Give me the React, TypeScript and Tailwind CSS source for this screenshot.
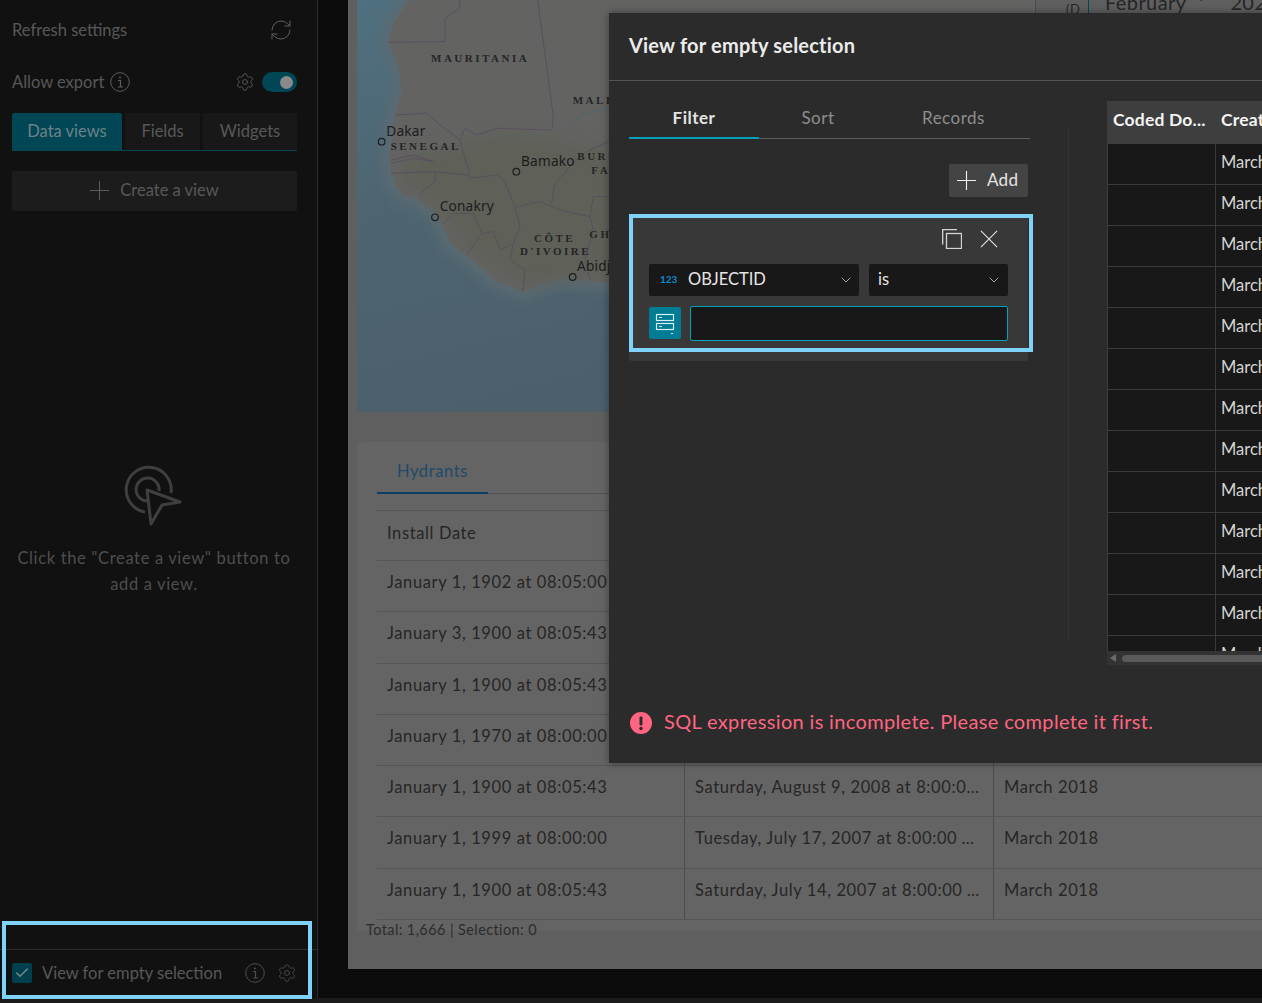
import React from "react";
import { Settings, Check, ChevronDown, RefreshCw } from "lucide-react";

const Info = ({ c, s = 20 }: { c: string; s?: number }) => (
  <svg width={s} height={s} viewBox="0 0 20 20" fill="none" stroke={c} strokeWidth="1">
    <circle cx="10" cy="10" r="9.3" />
    <path d="M8 8.5h2.5V15M8 15h5" strokeWidth="1.2" />
    <circle cx="10" cy="5.6" r="1" fill={c} stroke="none" />
  </svg>
);

const Cross = ({ c, s = 20, w = 1.2, diag = false }: { c: string; s?: number; w?: number; diag?: boolean }) => (
  <svg width={s} height={s} viewBox="0 0 20 20" fill="none" stroke={c} strokeWidth={w}>
    {diag ? <path d="M1 1L19 19M19 1L1 19" /> : <path d="M10 0V20M0 10H20" />}
  </svg>
);

const COAST = "M175 0L130 70L115 125L145 200L155 270L135 345L125 420L118 470L125 520L140 560L165 590L200 590L225 620L250 630L280 680L305 735L350 765L390 800L430 840L518 875L575 850L640 835L720 843L786 850L2055 850V0Z";

const WestAfricaMap = () => (
  <svg width="678" height="412" viewBox="21 0 2034 1236" className="block">
    <defs>
      <linearGradient id="sea" x1="0" y1="0" x2="0.4" y2="1">
        <stop offset="0" stopColor="#4f7080" />
        <stop offset="0.45" stopColor="#4e6571" />
        <stop offset="1" stopColor="#4b5f6b" />
      </linearGradient>
      <filter id="soft" x="-20%" y="-20%" width="140%" height="140%">
        <feGaussianBlur stdDeviation="16" />
      </filter>
      <filter id="softer" x="-20%" y="-20%" width="140%" height="140%">
        <feGaussianBlur stdDeviation="22" />
      </filter>
    </defs>
    <rect x="21" width="2034" height="1236" fill="url(#sea)" />
    <path d={COAST} fill="#5a6b72" stroke="#5a6b72" strokeWidth="50" strokeLinejoin="round" filter="url(#soft)" />
    <path d={COAST} fill="#636362" />
    <path d="M330 430L450 400L610 420L720 440L786 420V830L640 835L518 860L430 800L350 740L280 650L250 600L160 550L150 480Z" fill="#5e6058" filter="url(#softer)" />
    <g fill="none" stroke="#5a4f5f" strokeWidth="3">
      <path d="M330 0L328 25L285 55L285 125L115 127" />
      <path d="M563 0L610 350L606 390L440 385L380 405L345 385L330 420" />
      <path d="M135 345L230 340L270 375L330 420L355 510L360 535L440 525L465 545L490 610L500 620L570 605L630 630L720 650L730 590L786 590" />
      <path d="M125 480L190 465L250 485L190 475L125 490" />
      <path d="M125 520L250 515L355 525" />
      <path d="M210 580L255 545L255 515" />
      <path d="M280 670L310 640L370 640L395 700L430 695L450 750L490 730L510 680L495 620" />
      <path d="M350 765L395 700" />
      <path d="M490 730L480 780L525 810L518 875" />
      <path d="M605 610L615 550L660 500L700 460L786 420" />
      <path d="M720 650L730 690L705 780L720 840" />
      <path d="M660 375L700 340L786 320" stroke="#4e6672" />
    </g>
    <g fontFamily="'Liberation Serif', serif" fontWeight="700" fill="#252525" fontSize="33" letterSpacing="7.5">
      <text x="243" y="185">MAURITANIA</text>
      <text x="668" y="313">MALI</text>
      <text x="122" y="451">SENEGAL</text>
      <text x="682" y="480">BURKINA</text>
      <text x="724" y="522">FASO</text>
      <text x="552" y="725">CÔTE</text>
      <text x="510" y="765">D'IVOIRE</text>
      <text x="718" y="713">GHANA</text>
    </g>
    <g fontFamily="'Noto Sans', sans-serif" fill="#1c1c1c" fontSize="41">
      <text x="109" y="407">Dakar</text>
      <text x="513" y="497">Bamako</text>
      <text x="269" y="633">Conakry</text>
      <text x="681" y="813">Abidjan</text>
    </g>
    <g fill="none" stroke="#1c1c1c" strokeWidth="3.5">
      <circle cx="95" cy="425" r="10" />
      <circle cx="499" cy="515" r="10" />
      <circle cx="255" cy="652" r="10" />
      <circle cx="668" cy="831" r="10" />
    </g>
  </svg>
);

const rows: [string, string, string][] = [
  ["January 1, 1902 at 08:05:00", "Wednesday, May 2, 2007 at 8:00:00 AM", "March 2018"],
  ["January 3, 1900 at 08:05:43", "Friday, June 8, 2007 at 8:00:00 AM", "March 2018"],
  ["January 1, 1900 at 08:05:43", "Monday, July 2, 2007 at 8:00:00 AM", "March 2018"],
  ["January 1, 1970 at 08:00:00", "Tuesday, July 3, 2007 at 8:00:00 AM", "March 2018"],
  ["January 1, 1900 at 08:05:43", "Saturday, August 9, 2008 at 8:00:00 AM", "March 2018"],
  ["January 1, 1999 at 08:00:00", "Tuesday, July 17, 2007 at 8:00:00 AM", "March 2018"],
  ["January 1, 1900 at 08:05:43", "Saturday, July 14, 2007 at 8:00:00 AM", "March 2018"],
];

const Cell = ({ w, children, border = true }: { w: string; children?: React.ReactNode; border?: boolean }) => (
  <div className={`${w} h-full shrink-0 truncate px-[10px] leading-[43px] ${border ? "border-r border-[#4c4c4c]" : ""}`}>{children}</div>
);

export default function App() {
  return (
    <div className="relative flex h-[1003px] w-[1262px] flex-col overflow-hidden bg-[#0c0c0c] font-['Lato','Noto_Sans',sans-serif] text-[16.5px]">
      <div className="flex h-[998px] shrink-0">
        {/* Sidebar */}
        <aside className="flex h-[998px] w-[318px] shrink-0 flex-col border-r border-[#2c2c2c] bg-[#111111] text-[#585858]">
          <div className="flex h-[60px] items-center justify-between pl-[12px] pr-[24px]">
            <span>Refresh settings</span>
            <RefreshCw size={24} strokeWidth={1} color="#5e5e5e" />
          </div>
          <div className="flex h-[44px] items-center justify-between pl-[12px] pr-[20px]">
            <span className="flex items-center gap-[6px]">
              Allow export <Info c="#5e5e5e" />
            </span>
            <span className="flex items-center gap-[7px]">
              <Settings size={20} strokeWidth={1} color="#5e5e5e" />
              <span className="flex h-[20px] w-[35px] items-center justify-end rounded-full bg-[#004655] pr-[4px]">
                <span className="h-[13px] w-[13px] rounded-full bg-[#8a8a8a]" />
              </span>
            </span>
          </div>
          <div className="ml-[12px] mr-[20px] mt-[9px] flex h-[38px] gap-[3px] border-b border-[#004655]">
            <span className="flex w-[110px] items-center justify-center rounded-t-[2px] bg-[#004655] text-[#6c8288]">Data views</span>
            <span className="flex w-[75px] items-center justify-center bg-[#181818]">Fields</span>
            <span className="flex flex-1 items-center justify-center bg-[#181818]">Widgets</span>
          </div>
          <div className="ml-[12px] mr-[20px] mt-[20px] flex h-[40px] items-center justify-center gap-[11px] rounded-[2px] bg-[#1c1c1c] pb-[2px]">
            <Cross c="#5e5e5e" s={19} w={1} />
            <span>Create a view</span>
          </div>
          <div className="mt-[254px] flex flex-col items-center text-center leading-[26px] tracking-[0.65px] text-[#4e4e4e]">
            <svg width="60" height="62" viewBox="0 0 60 62" fill="none" stroke="#3f3f3f" strokeWidth="3" className="mb-[18px] -ml-[14px]">
              <path d="M23 47A22.500 22.500 0 1 1 49 28" />
              <path d="M27 36A11.500 11.500 0 1 1 37 26" />
              <path d="M25 25L58 37L40 40L29 59Z" strokeLinejoin="round" />
            </svg>
            <p className="-ml-[9px] w-[306px]">Click the "Create a view" button to<br />add a view.</p>
          </div>
          <div className="mt-auto flex h-[49px] items-center border-t border-[#2c2c2c] pb-[2px] pl-[12px] pr-[20px]">
            <span className="flex h-[20px] w-[20px] items-center justify-center rounded-[2px] bg-[#00404e]">
              <Check size={16} strokeWidth={2} color="#7b8b8e" />
            </span>
            <span className="ml-[10px] flex-1">View for empty selection</span>
            <Info c="#4e4e4e" />
            <Settings size={20} strokeWidth={1} color="#4e4e4e" className="ml-[12px]" />
          </div>
        </aside>

        {/* Page behind the dialog */}
        <main className="ml-[30px] h-[969px] w-[914px] shrink-0 overflow-hidden bg-[#5f5f5f] pl-[9px] tracking-[0.62px] text-[#262626]">
          <div className="flex h-[412px]">
            <div className="h-[412px] w-[678px] shrink-0 overflow-hidden rounded-b-[4px]">
              <WestAfricaMap />
            </div>
            <div className="flex h-[13px] flex-1 border-l border-[#4c4c4c]">
              <span className="w-[53px] border-r border-[#00495a] pl-[30px] text-[13px]">(D</span>
              <span className="-mt-[13px] ml-[16px] flex items-start whitespace-nowrap text-[20px] tracking-[0.4px]">
                February
                <ChevronDown size={14} strokeWidth={1.5} className="ml-[8px] mt-[5px]" />
                <span className="ml-[22px]">2024</span>
              </span>
            </div>
          </div>
          <section className="mt-[30px] h-[489px] w-[905px] rounded-t-[4px] bg-[#646464] pl-[20px]">
            <div className="flex h-[52px] items-end border-b border-[#525252]">
              <span className="-mb-px flex h-[35px] w-[111px] items-start justify-center border-b-[2px] border-[#0b3f66] text-[#1f4a68]">Hydrants</span>
            </div>
            <div className="mt-[16px] flex h-[51px] items-center border-y border-[#565656]">
              <Cell w="w-[307px] pt-[1px]" border={false}>Install Date</Cell>
            </div>
            {rows.map((r, i) => (
              <div key={i} className="flex h-[51.300px] items-center border-b border-[#565656]">
                <Cell w="w-[308px]">{r[0]}</Cell>
                <Cell w="w-[309px]">{r[1]}</Cell>
                <Cell w="w-[200px]" border={false}>{r[2]}</Cell>
              </div>
            ))}
            <div className="-ml-[11px] -mt-[1px] text-[14.500px] tracking-[0.4px] text-[#2c2c2c]">Total: 1,666 | Selection: 0</div>
          </section>
        </main>
      </div>
      <div className="flex-1 bg-[#1b1b1b]" />

      {/* Dialog */}
      <div className="absolute left-[609px] top-[13px] h-[750px] w-[800px] bg-[#2b2b2b] text-[#c4c4c4] shadow-[0_0_8px_rgba(0,0,0,0.4)]">
        <div className="flex h-[68px] items-center border-b border-[#555555] pb-[3px] pl-[20px] text-[20px] font-bold tracking-[0.2px] text-[#ececec]">View for empty selection</div>
        <div className="flex">
          <div className="w-[459px] shrink-0 pl-[20px]">
            <div className="mt-[16px] flex h-[42px] w-[401px] border-b border-[#5c5c5c] pt-[1px] text-[17px] tracking-[0.5px] text-[#8e8e8e]">
              <span className="-mb-px flex w-[130px] items-center justify-center border-b-[2px] border-[#00a0bd] font-bold text-[#e4e4e4]">Filter</span>
              <span className="flex w-[118px] items-center justify-center">Sort</span>
              <span className="flex flex-1 items-center justify-center">Records</span>
            </div>
            <div className="mt-[25px] flex w-[399px] justify-end">
              <span className="flex h-[33px] w-[79px] items-center gap-[11px] rounded-[2px] bg-[#444444] pl-[8px] text-[17px] tracking-[0.3px] text-[#e4e4e4]">
                <Cross c="#f0f0f0" s={19} /> <span className="-mt-[2px]">Add</span>
              </span>
            </div>
            <div className="mt-[18px] h-[146px] w-[399px] rounded-b-[2px] bg-[#383838] px-[20px]">
              <div className="flex h-[49px] items-center justify-end gap-[18px] pb-[2px] pr-[10px]">
                <svg width="20" height="20" viewBox="0 0 20 20" fill="none" stroke="#d4d4d4" strokeWidth="1.3">
                  <rect x="4.500" y="4.500" width="15" height="15" />
                  <path d="M0.700 15.500V0.700H15" />
                </svg>
                <Cross c="#e4e4e4" s={18} diag />
              </div>
              <div className="flex gap-[10px]">
                <div className="flex h-[32px] w-[210px] items-center rounded-[2px] bg-[#181818] pb-[2px] pl-[11px] pr-[5px] text-[#e6e6e6]">
                  <span className="w-[16px] text-[10px] font-bold text-[#1189d2]">123</span>
                  <span className="ml-[12px] flex-1">OBJECTID</span>
                  <ChevronDown size={16} strokeWidth={1.2} color="#c8c8c8" className="mt-[2px]" />
                </div>
                <div className="flex h-[32px] w-[139px] items-center justify-between rounded-[2px] bg-[#181818] pb-[2px] pl-[9px] pr-[6px] text-[#e6e6e6]">
                  <span>is</span>
                  <ChevronDown size={16} strokeWidth={1.2} color="#c8c8c8" className="mt-[2px]" />
                </div>
              </div>
              <div className="mt-[10px] flex gap-[9px]">
                <span className="mt-px flex h-[32px] w-[32px] items-center justify-center rounded-[2px] bg-[#007c94]">
                  <svg width="20" height="26" viewBox="0 0 20 26" fill="none" stroke="#d8eef2" strokeWidth="1.2">
                    <rect x="1.500" y="4.500" width="17" height="6" />
                    <rect x="1.500" y="13.500" width="17" height="6" />
                    <path d="M4 7.500h3M4 16.500h3" />
                    <path d="M15.500 23h3l-1.500 1.500z" fill="#d8eef2" stroke="none" />
                  </svg>
                </span>
                <span className="h-[35px] w-[319px] rounded-[2px] border border-[#00a3bd] bg-[#181818]" />
              </div>
            </div>
          </div>
          <div className="mt-[45px] h-[515px] w-px self-start bg-[#333333]" />
          <div className="ml-[38px] mt-[20px] w-[300px]">
            <div className="flex h-[43px] items-center bg-[#3e3e3e] pb-[4px] text-[17.500px] font-bold tracking-[0.18px] text-[#f4f4f4]">
              <span className="w-[108px] shrink-0 pl-[6px]">Coded Do...</span>
              <span className="pl-[6px]">Created</span>
            </div>
            <div className="h-[507px] overflow-hidden border-l border-[#3e3e3e] bg-[#181818]">
              {Array.from({ length: 13 }).map((_, i) => (
                <div key={i} className="flex h-[41px] border-b border-[#3a3a3a] text-[#d4d4d4]">
                  <span className="w-[108px] shrink-0 border-r border-[#3a3a3a]" />
                  <span className="pl-[5px] leading-[36px]">March 2018</span>
                </div>
              ))}
            </div>
            <div className="flex h-[14px] items-center bg-[#333333]">
              <span className="ml-[3px] h-0 w-0 border-y-[4px] border-r-[6px] border-y-transparent border-r-[#6a6a6a]" />
              <span className="ml-[6px] h-[7px] flex-1 rounded-full bg-[#5a5a5a]" />
            </div>
          </div>
        </div>
        <div className="absolute left-[20px] top-[693px] flex items-center gap-[11px] text-[20px] tracking-[0.34px] text-[#ff6580]">
          <svg width="24" height="24" viewBox="0 0 24 24" className="mt-[4px]">
            <circle cx="12" cy="12" r="11" fill="#ff6580" />
            <rect x="10.500" y="5.500" width="3" height="9" rx="1" fill="#2b2b2b" />
            <circle cx="12" cy="17.500" r="1.700" fill="#2b2b2b" />
          </svg>
          <span>SQL expression is incomplete. Please complete it first.</span>
        </div>
      </div>

      {/* Tour highlights */}
      <div className="pointer-events-none absolute left-[629px] top-[214px] h-[138px] w-[404px] border-[4px] border-[#7fd3fb]" />
      <div className="pointer-events-none absolute left-[2px] top-[921px] h-[78px] w-[310px] border-[4px] border-[#7fd3fb]" />
    </div>
  );
}
